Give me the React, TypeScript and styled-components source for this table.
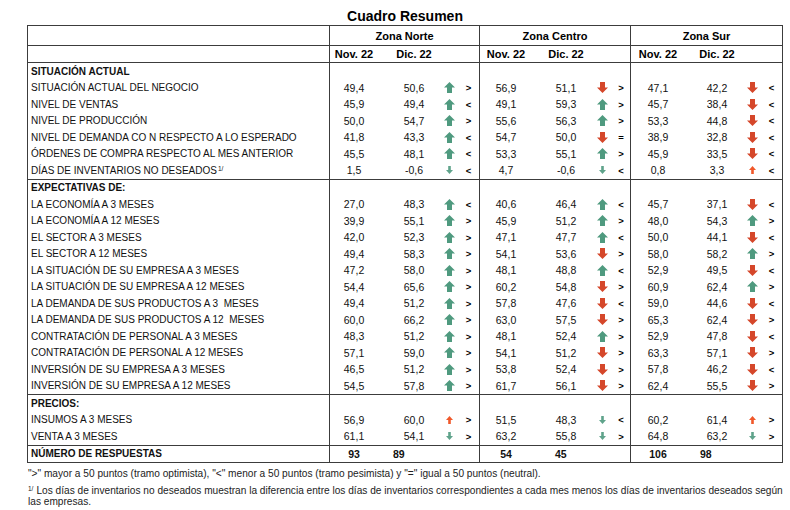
import React from 'react';
import styled, { createGlobalStyle } from 'styled-components';

const GlobalStyle = createGlobalStyle`
  body {
    margin: 0;
    background: #ffffff;
    font-family: 'Liberation Sans', Arial, sans-serif;
    color: #111111;
  }
`;

const LINE = '#3c3c3c';
const ROW_H = 16.5;

type Zone = {
  name: string;
  cols: string;
  width: number;
  dicPad: number;
  totalPad: number;
};

const zones: Zone[] = [
  { name: 'Zona Norte', cols: '48px 62px 18px 21px', width: 150, dicPad: 10, totalPad: 15 },
  { name: 'Zona Centro', cols: '52px 60px 20px 18px', width: 151, dicPad: 8, totalPad: 23 },
  { name: 'Zona Sur', cols: '54px 58px 18px 21px', width: 152, dicPad: 6, totalPad: 15 },
];

// U = big green up, D = big red down, u = small orange up, d = small green down
type Cell = [string, string, string, string];
type Item = { label: string; sup?: string; cells: Cell[] };
type Section = { title: string; items: Item[] };

const sections: Section[] = [
  {
    title: 'SITUACIÓN ACTUAL',
    items: [
      { label: 'SITUACIÓN ACTUAL DEL NEGOCIO', cells: [['49,4', '50,6', 'U', '>'], ['56,9', '51,1', 'D', '>'], ['47,1', '42,2', 'D', '<']] },
      { label: 'NIVEL DE VENTAS', cells: [['45,9', '49,4', 'U', '<'], ['49,1', '59,3', 'U', '>'], ['45,7', '38,4', 'D', '<']] },
      { label: 'NIVEL DE PRODUCCIÓN', cells: [['50,0', '54,7', 'U', '>'], ['55,6', '56,3', 'U', '>'], ['53,3', '44,8', 'D', '<']] },
      { label: 'NIVEL DE DEMANDA CO N RESPECTO A LO ESPERADO', cells: [['41,8', '43,3', 'U', '<'], ['54,7', '50,0', 'D', '='], ['38,9', '32,8', 'D', '<']] },
      { label: 'ÓRDENES DE COMPRA RESPECTO AL MES ANTERIOR', cells: [['45,5', '48,1', 'U', '<'], ['53,3', '55,1', 'U', '>'], ['45,9', '33,5', 'D', '<']] },
      { label: 'DÍAS DE INVENTARIOS NO DESEADOS', sup: '1/', cells: [['1,5', '-0,6', 'd', '<'], ['4,7', '-0,6', 'd', '<'], ['0,8', '3,3', 'u', '<']] },
    ],
  },
  {
    title: 'EXPECTATIVAS DE:',
    items: [
      { label: 'LA ECONOMÍA A 3 MESES', cells: [['27,0', '48,3', 'U', '<'], ['40,6', '46,4', 'U', '<'], ['45,7', '37,1', 'D', '<']] },
      { label: 'LA ECONOMÍA A 12 MESES', cells: [['39,9', '55,1', 'U', '>'], ['45,9', '51,2', 'U', '>'], ['48,0', '54,3', 'U', '>']] },
      { label: 'EL SECTOR A 3 MESES', cells: [['42,0', '52,3', 'U', '>'], ['47,1', '47,7', 'U', '<'], ['50,0', '44,1', 'D', '<']] },
      { label: 'EL SECTOR A 12 MESES', cells: [['49,4', '58,3', 'U', '>'], ['54,1', '53,6', 'D', '>'], ['58,0', '58,2', 'U', '>']] },
      { label: 'LA SITUACIÓN DE SU EMPRESA A 3 MESES', cells: [['47,2', '58,0', 'U', '>'], ['48,1', '48,8', 'U', '<'], ['52,9', '49,5', 'D', '<']] },
      { label: 'LA SITUACIÓN DE SU EMPRESA A 12 MESES', cells: [['54,4', '65,6', 'U', '>'], ['60,2', '54,8', 'D', '>'], ['60,9', '62,4', 'U', '>']] },
      { label: 'LA DEMANDA DE SUS PRODUCTOS A 3  MESES', cells: [['49,4', '51,2', 'U', '>'], ['57,8', '47,6', 'D', '<'], ['59,0', '44,6', 'D', '<']] },
      { label: 'LA DEMANDA DE SUS PRODUCTOS A 12  MESES', cells: [['60,0', '66,2', 'U', '>'], ['63,0', '57,5', 'D', '>'], ['65,3', '62,4', 'D', '>']] },
      { label: 'CONTRATACIÓN DE PERSONAL A 3 MESES', cells: [['48,3', '51,2', 'U', '>'], ['48,1', '52,4', 'U', '>'], ['52,9', '47,8', 'D', '<']] },
      { label: 'CONTRATACIÓN DE PERSONAL A 12 MESES', cells: [['57,1', '59,0', 'U', '>'], ['54,1', '51,2', 'D', '>'], ['63,3', '57,1', 'D', '>']] },
      { label: 'INVERSIÓN DE SU EMPRESA A 3 MESES', cells: [['46,5', '51,2', 'U', '>'], ['53,8', '52,4', 'D', '>'], ['57,8', '46,2', 'D', '<']] },
      { label: 'INVERSIÓN DE SU EMPRESA A 12 MESES', cells: [['54,5', '57,8', 'U', '>'], ['61,7', '56,1', 'D', '>'], ['62,4', '55,5', 'D', '>']] },
    ],
  },
  {
    title: 'PRECIOS:',
    items: [
      { label: 'INSUMOS A 3 MESES', cells: [['56,9', '60,0', 'u', '>'], ['51,5', '48,3', 'd', '<'], ['60,2', '61,4', 'u', '>']] },
      { label: 'VENTA A 3 MESES', cells: [['61,1', '54,1', 'd', '>'], ['63,2', '55,8', 'd', '>'], ['64,8', '63,2', 'd', '>']] },
    ],
  },
];

const totals = [['93', '89'], ['54', '45'], ['106', '98']];

function Arrow({ kind }: { kind: string }) {
  if (kind === 'U') {
    return (
      <svg width="11" height="11" viewBox="0 0 11 11">
        <polygon points="5.5,0 11,5.5 8,5.5 8,11 3,11 3,5.5 0,5.5" fill="#4f9a7f" />
      </svg>
    );
  }
  if (kind === 'D') {
    return (
      <svg width="11" height="11" viewBox="0 0 11 11">
        <polygon points="3,0 8,0 8,5.5 11,5.5 5.5,11 0,5.5 3,5.5" fill="#d5472a" />
      </svg>
    );
  }
  if (kind === 'u') {
    return (
      <svg width="7" height="8" viewBox="0 0 7 8">
        <polygon points="3.5,0 7,4 4.8,4 4.8,8 2.2,8 2.2,4 0,4" fill="#f0582a" />
      </svg>
    );
  }
  return (
    <svg width="7" height="8" viewBox="0 0 7 8">
      <polygon points="2.2,0 4.8,0 4.8,4 7,4 3.5,8 0,4 2.2,4" fill="#5fa38b" />
    </svg>
  );
}

function ZoneCells({ zone, cell }: { zone: Zone; cell?: Cell }) {
  return (
    <ZoneBox $cols={zone.cols}>
      {cell && (
        <>
          <Value>{cell[0]}</Value>
          <Value $pad={zone.dicPad}>{cell[1]}</Value>
          <ArrowCell>
            <Arrow kind={cell[2]} />
          </ArrowCell>
          <Sign>{cell[3]}</Sign>
        </>
      )}
    </ZoneBox>
  );
}

export default function App() {
  return (
    <>
      <GlobalStyle />
      <Title>Cuadro Resumen</Title>
      <Table>
        <Row $h={20} $line>
          <Label />
          {zones.map((z) => (
            <ZoneHead key={z.name}>{z.name}</ZoneHead>
          ))}
        </Row>
        <Row $h={17} $line>
          <Label />
          {zones.map((z) => (
            <ZoneBox key={z.name} $cols={z.cols}>
              <Month>Nov. 22</Month>
              <Month $pad={z.dicPad}>Dic. 22</Month>
            </ZoneBox>
          ))}
        </Row>
        {sections.map((s) => (
          <Block key={s.title}>
            <Row $h={ROW_H}>
              <Label $bold>{s.title}</Label>
              {zones.map((z) => (
                <ZoneCells key={z.name} zone={z} />
              ))}
            </Row>
            {s.items.map((it) => (
              <Row key={it.label} $h={ROW_H}>
                <Label>
                  {it.label}
                  {it.sup && <LabelSup>{it.sup}</LabelSup>}
                </Label>
                {zones.map((z, i) => (
                  <ZoneCells key={z.name} zone={z} cell={it.cells[i]} />
                ))}
              </Row>
            ))}
          </Block>
        ))}
        <Row $h={ROW_H}>
          <Label $bold>NÚMERO DE RESPUESTAS</Label>
          {zones.map((z, i) => (
            <ZoneBox key={z.name} $cols={z.cols}>
              <Value $bold>{totals[i][0]}</Value>
              <Value $bold $left={z.totalPad}>
                {totals[i][1]}
              </Value>
            </ZoneBox>
          ))}
        </Row>
      </Table>
      <Notes>
        <Note>
          "&gt;" mayor a 50 puntos (tramo optimista), "&lt;" menor a 50 puntos (tramo pesimista) y "=" igual a 50
          puntos (neutral).
        </Note>
        <Note $gap>
          <NoteSup>1/</NoteSup>
          <span>
            Los días de inventarios no deseados muestran la diferencia entre los días de inventarios
            correspondientes a cada mes menos los días de inventarios deseados según
          </span>
          <br />
          <span>las empresas.</span>
        </Note>
      </Notes>
    </>
  );
}

const Title = styled.div`
  width: 756px;
  height: 25px;
  box-sizing: border-box;
  margin-left: 27px;
  padding-top: 8px;
  text-align: center;
  font-size: 14px;
  line-height: 16px;
  font-weight: 700;
  color: #000;
`;

const Table = styled.div`
  width: 756px;
  margin-left: 27px;
  border: 1px solid ${LINE};
  box-sizing: border-box;
`;

const Row = styled.div<{ $h: number; $line?: boolean }>`
  display: grid;
  grid-template-columns: 301px ${zones.map((z) => `${z.width}px`).join(' ')};
  height: ${({ $h }) => $h}px;
  box-sizing: border-box;
  border-bottom: ${({ $line }) => ($line ? `1px solid ${LINE}` : 'none')};
`;

const Block = styled.div`
  border-bottom: 1px solid ${LINE};
`;

const Label = styled.div<{ $bold?: boolean }>`
  display: flex;
  align-items: center;
  padding-left: 3px;
  font-size: 10px;
  font-weight: ${({ $bold }) => ($bold ? 700 : 400)};
  white-space: pre;
  color: #111;
`;

const LabelSup = styled.span`
  font-size: 6.5px;
  align-self: flex-start;
  margin-top: 3px;
  margin-left: 1px;
`;

const ZoneHead = styled.div`
  display: flex;
  align-items: center;
  justify-content: center;
  border-left: 1px solid ${LINE};
  font-size: 11px;
  font-weight: 700;
  color: #000;
`;

const ZoneBox = styled.div<{ $cols: string }>`
  display: grid;
  grid-template-columns: ${({ $cols }) => $cols};
  align-items: center;
  border-left: 1px solid ${LINE};
  height: 100%;
`;

const Month = styled.div<{ $pad?: number }>`
  text-align: center;
  padding-left: ${({ $pad }) => $pad || 0}px;
  font-size: 11px;
  font-weight: 700;
  color: #000;
`;

const Value = styled.div<{ $pad?: number; $left?: number; $bold?: boolean }>`
  text-align: ${({ $left }) => ($left !== undefined ? 'left' : 'center')};
  padding-left: ${({ $pad, $left }) => ($left !== undefined ? $left : $pad || 0)}px;
  font-size: 10.5px;
  font-weight: ${({ $bold }) => ($bold ? 700 : 400)};
  color: #111;
`;

const ArrowCell = styled.div`
  display: flex;
  justify-content: center;
  align-items: center;
`;

const Sign = styled.div`
  text-align: center;
  font-size: 9.5px;
  font-weight: 700;
  color: #000;
`;

const Notes = styled.div`
  width: 760px;
  margin-left: 28px;
  margin-top: 5px;
  font-size: 10.15px;
  line-height: 11px;
  color: #222;
`;

const Note = styled.p<{ $gap?: boolean }>`
  margin: ${({ $gap }) => ($gap ? '5.5px' : '0')} 0 0 0;
`;

const NoteSup = styled.span`
  display: inline-block;
  font-size: 6.5px;
  line-height: 7px;
  vertical-align: 3px;
  margin-right: 3px;
`;
